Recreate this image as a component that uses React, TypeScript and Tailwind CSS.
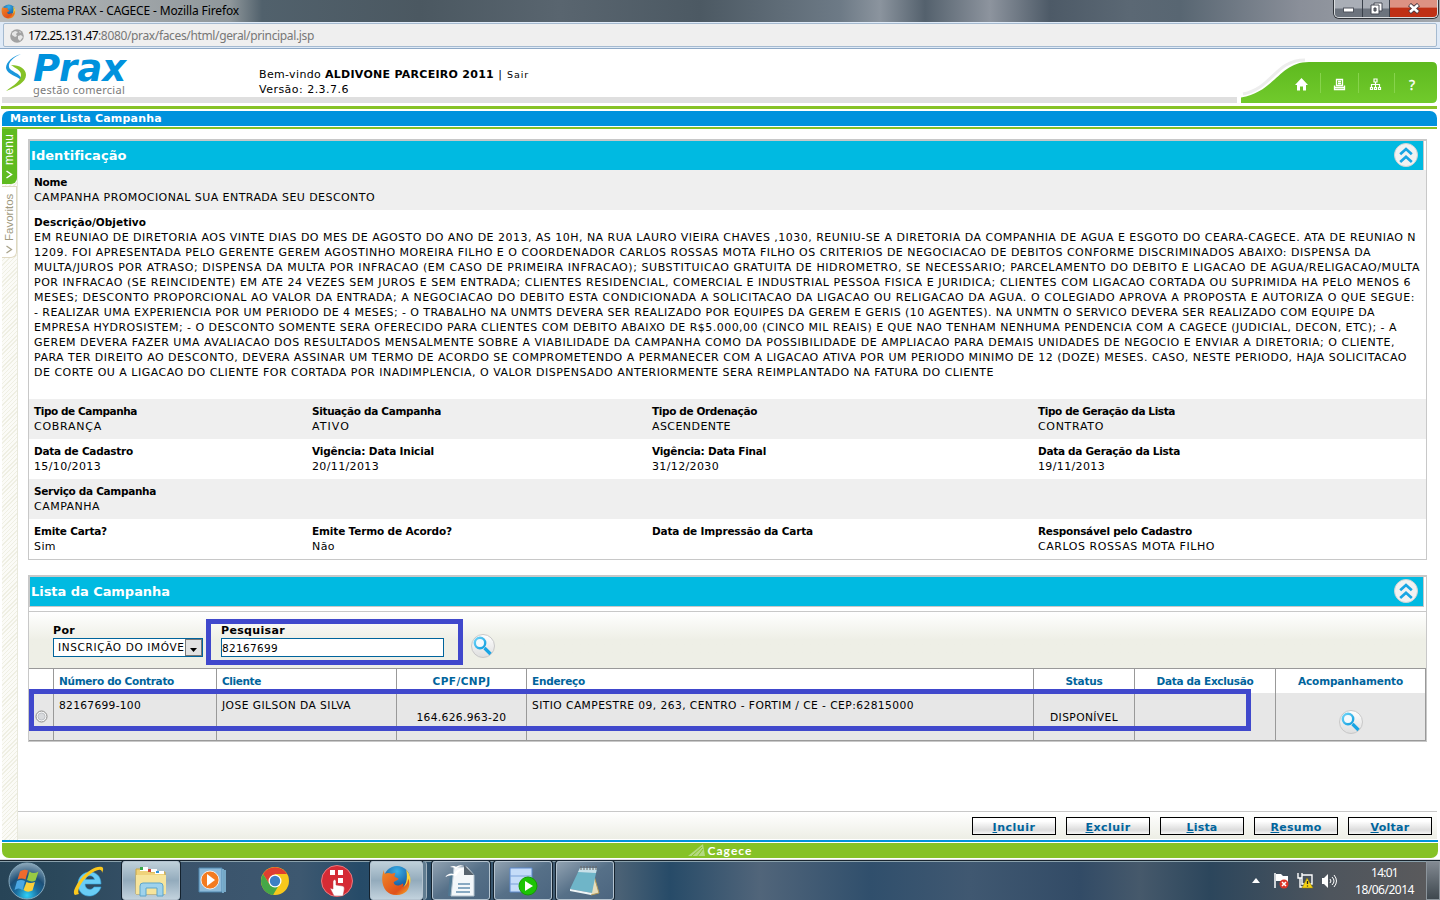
import React, { useLayoutEffect, useRef } from "react";

/* Inline text spread over a given width in pixels by letter spacing. */
function T({ w, className = "", children }: { w: number; className?: string; children: React.ReactNode }) {
  const ref = useRef<HTMLSpanElement>(null);
  useLayoutEffect(() => {
    const el = ref.current;
    if (!el) return;
    el.style.letterSpacing = "0px";
    const natural = el.getBoundingClientRect().width;
    el.style.letterSpacing = (w - natural) / (el.textContent || " ").length + "px";
  }, [w, children]);
  return (
    <span ref={ref} className={"inline-block whitespace-pre " + className}>
      {children}
    </span>
  );
}

function Field({ label, lw, value, vw }: { label: string; lw: number; value?: string; vw?: number }) {
  return (
    <div className="flex flex-col items-start">
      <T w={lw} className="text-[10.500px] font-bold">{label}</T>
      {value && <T w={vw || 0}>{value}</T>}
    </div>
  );
}

function Row({ shade, children }: { shade?: boolean; children: React.ReactNode }) {
  return (
    <div
      className={
        "grid h-10 shrink-0 grid-cols-[278px_340px_386px_1fr] pt-[5px] pl-[5px] leading-[15px] " +
        (shade ? "bg-[#efefef]" : "bg-white")
      }
    >
      {children}
    </div>
  );
}

const description: [string, number][] = [
  ["EM REUNIAO DE DIRETORIA AOS VINTE DIAS DO MES DE AGOSTO DO ANO DE 2013, AS 10H, NA RUA LAURO VIEIRA CHAVES ,1030, REUNIU-SE A DIRETORIA DA COMPANHIA DE AGUA E ESGOTO DO CEARA-CAGECE. ATA DE REUNIAO N", 1382],
  ["1209. FOI APRESENTADA PELO GERENTE GEREM AGOSTINHO MOREIRA FILHO E O COORDENADOR CARLOS ROSSAS MOTA FILHO OS CRITERIOS DE NEGOCIACAO DE DEBITOS CONFORME DISCRIMINADOS ABAIXO: DISPENSA DA", 1337],
  ["MULTA/JUROS POR ATRASO; DISPENSA DA MULTA POR INFRACAO (EM CASO DE PRIMEIRA INFRACAO); SUBSTITUICAO GRATUITA DE HIDROMETRO, SE NECESSARIO; PARCELAMENTO DO DEBITO E LIGACAO DE AGUA/RELIGACAO/MULTA", 1386],
  ["POR INFRACAO (SE REINCIDENTE) EM ATE 24 VEZES SEM JUROS E SEM ENTRADA; CLIENTES RESIDENCIAL, COMERCIAL E INDUSTRIAL PESSOA FISICA E JURIDICA; CLIENTES COM LIGACAO CORTADA OU SUPRIMIDA HA PELO MENOS 6", 1377],
  ["MESES; DESCONTO PROPORCIONAL AO VALOR DA ENTRADA; A NEGOCIACAO DO DEBITO ESTA CONDICIONADA A SOLICITACAO DA LIGACAO OU RELIGACAO DA AGUA. O COLEGIADO APROVA A PROPOSTA E AUTORIZA O QUE SEGUE:", 1381],
  ["- REALIZAR UMA EXPERIENCIA POR UM PERIODO DE 4 MESES; - O TRABALHO NA UNMTS DEVERA SER REALIZADO POR EQUIPES DA GEREM E GERIS (10 AGENTES). NA UNMTN O SERVICO DEVERA SER REALIZADO COM EQUIPE DA", 1341],
  ["EMPRESA HYDROSISTEM; - O DESCONTO SOMENTE SERA OFERECIDO PARA CLIENTES COM DEBITO ABAIXO DE R$5.000,00 (CINCO MIL REAIS) E QUE NAO TENHAM NENHUMA PENDENCIA COM A CAGECE (JUDICIAL, DECON, ETC); - A", 1363],
  ["GEREM DEVERA FAZER UMA AVALIACAO DOS RESULTADOS MENSALMENTE SOBRE A VIABILIDADE DA CAMPANHA COMO DA POSSIBILIDADE DE AMPLIACAO PARA DEMAIS UNIDADES DE NEGOCIO E ENVIAR A DIRETORIA; O CLIENTE,", 1361],
  ["PARA TER DIREITO AO DESCONTO, DEVERA ASSINAR UM TERMO DE ACORDO SE COMPROMETENDO A PERMANECER COM A LIGACAO ATIVA POR UM PERIODO MINIMO DE 12 (DOZE) MESES. CASO, NESTE PERIODO, HAJA SOLICITACAO", 1373],
  ["DE CORTE OU A LIGACAO DO CLIENTE FOR CORTADA POR INADIMPLENCIA, O VALOR DISPENSADO ANTERIORMENTE SERA REIMPLANTADO NA FATURA DO CLIENTE", 960],
];

function FirefoxLogo({ size }: { size: number }) {
  return (
    <svg width={size} height={size} viewBox="0 0 32 32" className="block shrink-0">
      <defs>
        <radialGradient id="ffBlue" cx="0.5" cy="0.2" r="0.8">
          <stop offset="0" stopColor="#39b0e8" />
          <stop offset="1" stopColor="#0b3d86" />
        </radialGradient>
        <linearGradient id="ffFox" x1="0" y1="0" x2="1" y2="1">
          <stop offset="0" stopColor="#f08a28" />
          <stop offset="0.7" stopColor="#e0501a" />
          <stop offset="1" stopColor="#f9b92a" />
        </linearGradient>
      </defs>
      <circle cx="16.5" cy="14.5" r="13.5" fill="url(#ffBlue)" />
      <path d="M26 5c5 5 6 13 2 19-4 6-11 8-17 6l9-5c6-3 8-10 6-20z" fill="#fbd23a" />
      <path d="M3 5c0 2 0 3 1 4 2-1 5-1 7 0l4-1c-1 2-1 3-1 4l4 2c0 2-3 2-5 4 1 4 6 4 9 1 2 1 1 3 0 4 4-1 6-5 6-9 3 6 1 17-12 17C4 31-2 19 3 5z" fill="url(#ffFox)" />
    </svg>
  );
}

function Lens() {
  return (
    <svg width="26" height="26" viewBox="0 0 26 26" className="block">
      <defs>
        <linearGradient id="lensBg" x1="0" y1="0" x2="0" y2="1">
          <stop offset="0" stopColor="#ffffff" />
          <stop offset="1" stopColor="#dedede" />
        </linearGradient>
        <linearGradient id="lensRing" x1="0" y1="0" x2="1" y2="1">
          <stop offset="0" stopColor="#6fd3f7" />
          <stop offset="1" stopColor="#0f9fe0" />
        </linearGradient>
      </defs>
      <circle cx="13" cy="13" r="11.500" fill="url(#lensBg)" stroke="#c8c8c8" />
      <circle cx="10" cy="10" r="5.200" fill="#f4fafd" stroke="url(#lensRing)" strokeWidth="2.400" />
      <path d="M14.500 15l6 6" stroke="#18a5e4" strokeWidth="3.200" />
    </svg>
  );
}

function CollapseIcon() {
  return (
    <svg width="24" height="24" viewBox="0 0 24 24" className="-mt-px block">
      <circle cx="12" cy="12" r="11.500" fill="#f2f2f2" stroke="#d2d2d2" />
      <path d="M6.200 11.200L12 6l5.800 5.200M6.200 19L12 13.800l5.800 5.200" fill="none" stroke="#18a5e4" strokeWidth="2.700" />
    </svg>
  );
}

function PanelTitle({ title, w }: { title: string; w: number }) {
  return (
    <div className="-mt-0.5 mr-[2px] flex h-[32px] shrink-0 items-center justify-between border border-t-2 border-[#c8c8c8] bg-[#00bae1] pr-[5px] pl-px text-white">
      <T w={w} className="text-[13px] leading-4 font-bold">{title}</T>
      <CollapseIcon />
    </div>
  );
}

function ActionButton({ first, rest, w }: { first: string; rest: string; w: number }) {
  return (
    <button className="flex h-[18px] w-[84px] items-center justify-center border border-black bg-linear-to-b from-white from-20% via-[#dcdcdc] via-75% to-[#f6f6f6] pt-[3px] text-[11px] leading-none font-bold text-[#00649c]">
      <T w={w}>
        <span className="underline underline-offset-1">{first}</span>
        {rest}
      </T>
    </button>
  );
}

function TaskButton({ active, className, children }: { active?: boolean; className: string; children: React.ReactNode }) {
  return (
    <div
      className={
        "flex h-[39px] shrink-0 items-center justify-center rounded-[3px] border border-[#b4c3cf] shadow-[0_0_0_1px_#14222e] " +
        (active ? "bg-linear-to-b from-[#bfd0da] via-[#93abbc] to-[#c2d2dd] " : "bg-linear-to-br from-[#91a2b1] via-[#567088] to-[#4c6680] ") +
        className
      }
    >
      {children}
    </div>
  );
}

const cell = "border-r border-[#999999] ";

export default function App() {
  return (
    <div className="relative flex h-[900px] w-[1440px] flex-col overflow-hidden bg-white font-['DejaVu_Sans',sans-serif] text-[11px] text-black">
      {/* Window title bar */}
      <div className="flex h-[22px] shrink-0 items-start justify-between bg-[linear-gradient(90deg,#b9bcbd_0,#a2a7aa_120px,#8f979b_230px,#51616c_262px,#4b5861_420px,#59656f_560px,#4c5963_700px,#6d7a86_840px,#8b949e_880px,#54616d_925px,#8d949e_990px,#4d5a67_1050px,#5b6874_1130px,#586672_1180px,#8a8f99_1300px,#a3a8ad_1440px)]">
        <div className="flex h-[22px] items-center gap-[5px] pl-px">
          <FirefoxLogo size={15} />
          <T w={218} className="font-['Noto_Sans',sans-serif] text-[12px] leading-4">Sistema PRAX - CAGECE - Mozilla Firefox</T>
        </div>
        <div className="mr-0.5 flex h-[18px] w-[104px] overflow-hidden rounded-b-[5px] border border-t-0 border-[#dadde0] shadow-[0_0_0_1px_#30343a]">
          <div className="flex w-7 items-center justify-center border-r border-[#39404a] bg-linear-to-b from-[#a9aeb6] from-45% to-[#6c737d] to-55%">
            <svg width="14" height="8" viewBox="0 0 14 8"><rect x="1.500" y="3" width="10" height="4" fill="#fff" stroke="#50555e" /></svg>
          </div>
          <div className="flex w-[27px] items-center justify-center border-r border-[#39404a] bg-linear-to-b from-[#a9aeb6] from-45% to-[#6c737d] to-55%">
            <svg width="13" height="13" viewBox="0 0 13 13" fill="#fff" stroke="#444953"><path d="M4 1h8v8H4z" /><path d="M1 3h8v9H1z" /><path d="M4 6h2v3H4z" fill="#777" /></svg>
          </div>
          <div className="flex flex-1 items-center justify-center bg-linear-to-b from-[#dd9283] from-40% to-[#bf3015] to-50%">
            <svg width="14" height="11" viewBox="0 0 14 11"><path d="M2.500 1.500l9 8M11.500 1.500l-9 8" stroke="#4d3b42" strokeWidth="4.400" /><path d="M3 2l8 7M11 2L3 9" stroke="#fff" strokeWidth="2.600" /></svg>
          </div>
        </div>
      </div>

      {/* Address bar */}
      <div className="flex h-[27px] shrink-0 border-b border-[#8fa9c6] bg-[#dfeaf7] px-[3px] py-px">
        <div className="flex h-6 flex-1 items-center rounded-[2px] border border-[#a5bad0] bg-[#efefef] pt-px pl-[6px] font-['Noto_Sans',sans-serif] text-[12px] leading-4">
          <svg width="14" height="14" viewBox="0 0 14 14" className="mr-1"><circle cx="7" cy="7" r="6.800" fill="#a2a2a2" /><path d="M2 4l3-2 3 1-2 2 1 2-2 1-3-2zM8 7l3-1 2 2-3 4-2-2zM9 2l2 1-1 1z" fill="#e6e6e6" /></svg>
          <T w={70}>172.25.131.47</T>
          <T w={216} className="text-[#777777]">:8080/prax/faces/html/geral/principal.jsp</T>
        </div>
      </div>

      {/* Application header */}
      <header className="flex h-[57px] shrink-0 pl-[2px]">
        <div className="flex h-[54px] w-[1235px] flex-col">
          <div className="flex h-12 shrink-0">
            <div className="flex w-[257px] shrink-0 pt-1 pl-[3px]">
              <svg width="22" height="40" viewBox="0 0 22 40" className="shrink-0">
                <path d="M16 1C8 3 1 9 1 15c1 7 12 8 16 13 0-8-12-9-13-14C3 9 9 4 16 1z" fill="#1a97dc" />
                <path d="M6 12c9 0 15 4 15 10 0 7-9 12-20 16 8-6 15-10 15-16 0-5-6-7-10-10z" fill="#86c226" />
              </svg>
              <div className="flex flex-col items-start pl-[6px]">
                <T w={93} className="h-[31px] font-['DejaVu_Sans'] text-[37px] leading-[31px] font-bold text-[#0092dd] italic">Prax</T>
                <T w={92} className="font-['Noto_Sans',sans-serif] text-[11px] leading-[12px] text-[#7b7b7b]">gestão comercial</T>
              </div>
            </div>
            <div className="flex flex-col items-start pt-[18px] leading-[15px]">
              <div className="flex h-[15px] items-baseline">
                <T w={66}>Bem-vindo </T>
                <T w={169} className="font-bold">ALDIVONE PARCEIRO 2011</T>
                <T w={13}> | </T>
                <T w={22} className="text-[9.500px]">Sair</T>
              </div>
              <T w={90}>Versão: 2.3.7.6</T>
            </div>
          </div>
          <div className="h-[6px] shrink-0 bg-[#dfdfdf]" />
        </div>
        <div className="mt-[5px] w-[202px]">
          <svg width="202" height="52" viewBox="0 0 202 52">
            <defs>
              <linearGradient id="tab" x1="0" y1="0" x2="0" y2="1"><stop offset="0" stopColor="#5eb91f" /><stop offset="1" stopColor="#71ca2c" /></linearGradient>
            </defs>
            <path d="M6 40C36 34 38 6 68 6" fill="none" stroke="#ededed" strokeWidth="3" />
            <path d="M4 43.500C38 38 42 8 72 8H195q5 0 5 5V44q0 5-5 5H4z" fill="url(#tab)" />
            <g stroke="#87d34c"><path d="M83.500 19v20M121.500 19v20M157.500 19v20" /></g>
            <path d="M64.500 24l6.500 7h-2v5.500h-3v-4h-3v4h-3v-5.500h-2z" fill="#fff" />
            <path d="M99.500 25.500h6v6h-6zM97.500 31.500v4h10v-4M97.500 33.500h10M101 27.500h3M101 29.500h3" fill="none" stroke="#fff" strokeWidth="1.300" />
            <path d="M137 25h3v3h-3zM138.500 28v3M134.500 33v-2.500h8V33M138.500 30v3M133.500 33.500h2v2h-2zM137.500 33.500h2v2h-2zM141.500 33.500h2v2h-2z" fill="none" stroke="#fff" strokeWidth="1.200" />
            <text x="172" y="36" fill="#fff" stroke="#fff" strokeWidth="0.300" fontSize="14" fontFamily="Noto Sans">?</text>
          </svg>
        </div>
      </header>
      <div className="mr-[3px] ml-px h-[3px] shrink-0 bg-[#86c226]" />
      <div className="mt-0.5 mr-[3px] mb-px ml-[2px] flex h-[15px] shrink-0 items-center rounded-t-[7px] bg-[#0092dd] pl-2 text-white">
        <T w={152} className="leading-[15px] font-bold">Manter Lista Campanha</T>
      </div>
      <div className="mr-[3px] ml-[2px] h-0.5 shrink-0 bg-[#86c226]" />

      <div className="flex h-[711px] shrink-0">
        {/* Side tabs */}
        <aside className="mr-2.5 ml-[2px] flex w-4 shrink-0 flex-col border-r border-[#e8e8dc] bg-[repeating-linear-gradient(135deg,#efefe3_0,#efefe3_1px,#fbfbf7_1px,#fbfbf7_3px)]">
          <div className="flex h-[55px] w-[15px] flex-col items-center justify-between rounded-br-[6px] bg-[#5fbb20] pt-1 pb-[5px] text-white">
            <div className="h-8 w-[15px] rotate-180 font-['Liberation_Sans'] text-[12px] leading-[15px] tracking-[0.300px] [writing-mode:vertical-rl]">menu</div>
            <svg width="9" height="9" viewBox="0 0 9 9"><path d="M1.500 1l5 3.500-5 3.500" fill="none" stroke="#fff" strokeWidth="1.500" /></svg>
          </div>
          <div className="mt-0.5 flex h-[72px] w-[15px] flex-col items-center justify-between rounded-br-[6px] border border-l-0 border-[#dfd8c0] bg-white pt-1 pb-[3px] text-[#a09a80]">
            <div className="h-[50px] w-[15px] rotate-180 font-['Liberation_Sans'] text-[11.500px] leading-[15px] [writing-mode:vertical-rl]">Favoritos</div>
            <svg width="9" height="9" viewBox="0 0 9 9"><path d="M1.500 1l5 3.500-5 3.500" fill="none" stroke="#a8a28a" strokeWidth="1.300" /></svg>
          </div>
        </aside>

        <main className="flex w-[1399px] flex-col pt-[10px]">
          {/* Campaign identification */}
          <section className="flex h-[421px] shrink-0 flex-col border border-t-2 border-[#c8c8c8]">
            <PanelTitle title="Identificação" w={95} />
            <div className="-mt-px flex flex-col">
              <Row shade><Field label="Nome" lw={33} value="CAMPANHA PROMOCIONAL SUA ENTRADA SEU DESCONTO" vw={341} /></Row>
              <div className="flex h-[189px] shrink-0 flex-col items-start pt-[5px] pl-[5px] leading-[15px]">
                <T w={112} className="text-[10.500px] font-bold">Descrição/Objetivo</T>
                {description.map(([line, w]) => (
                  <T key={line} w={w}>{line}</T>
                ))}
              </div>
              <Row shade>
                <Field label="Tipo de Campanha" lw={103} value="COBRANÇA" vw={68} />
                <Field label="Situação da Campanha" lw={129} value="ATIVO" vw={38} />
                <Field label="Tipo de Ordenação" lw={105} value="ASCENDENTE" vw={79} />
                <Field label="Tipo de Geração da Lista" lw={137} value="CONTRATO" vw={66} />
              </Row>
              <Row>
                <Field label="Data de Cadastro" lw={99} value="15/10/2013" vw={67} />
                <Field label="Vigência: Data Inicial" lw={122} value="20/11/2013" vw={67} />
                <Field label="Vigência: Data Final" lw={114} value="31/12/2030" vw={67} />
                <Field label="Data da Geração da Lista" lw={142} value="19/11/2013" vw={67} />
              </Row>
              <Row shade><Field label="Serviço da Campanha" lw={122} value="CAMPANHA" vw={66} /></Row>
              <Row>
                <Field label="Emite Carta?" lw={73} value="Sim" vw={22} />
                <Field label="Emite Termo de Acordo?" lw={140} value="Não" vw={23} />
                <Field label="Data de Impressão da Carta" lw={161} />
                <Field label="Responsável pelo Cadastro" lw={154} value="CARLOS ROSSAS MOTA FILHO" vw={177} />
              </Row>
            </div>
          </section>

          {/* Campaign list */}
          <section className="mt-[15px] flex h-[167px] shrink-0 flex-col border border-t-2 border-[#c8c8c8]">
            <PanelTitle title="Lista da Campanha" w={139} />
            <div className="mt-[4px] flex h-[57px] shrink-0 items-start border-t border-[#c8c8c8] bg-linear-to-b from-white to-[#eeefe6] to-50% pl-6">
              <div className="flex w-[168px] flex-col items-start pt-3">
                <T w={22} className="leading-[14px] font-bold">Por</T>
                <div className="flex h-[19px] w-[150px] justify-between border border-[#00649c] bg-white">
                  <div className="w-[131px] overflow-hidden pl-1 leading-[17px]"><T w={133} className="text-[10.500px]">INSCRIÇÃO DO IMÓVEL</T></div>
                  <div className="flex w-[17px] shrink-0 items-center justify-center border border-[#777] bg-[#e2e2e2] pt-1">
                    <svg width="7" height="4" viewBox="0 0 7 4"><path d="M0 0h7L3.500 4z" /></svg>
                  </div>
                </div>
              </div>
              <div className="flex w-[249px] flex-col items-start pt-3">
                <T w={64} className="leading-[14px] font-bold">Pesquisar</T>
                <div className="h-[19px] w-[223px] border border-[#00649c] bg-white pt-px leading-[17px]"><T w={56} className="text-[10.500px]">82167699</T></div>
              </div>
              <div className="mt-[21px]"><Lens /></div>
            </div>
            <div className="grid h-[25px] shrink-0 grid-cols-[25px_163px_180px_130px_507px_101px_141px_150px] border-t border-[#999999] text-[10.500px] leading-[25px] font-bold text-[#00649c]">
              <div className={cell} />
              <div className={cell + "pl-[5px]"}><T w={115}>Número do Contrato</T></div>
              <div className={cell + "pl-[5px]"}><T w={39}>Cliente</T></div>
              <div className={cell + "text-center"}><T w={58}>CPF/CNPJ</T></div>
              <div className={cell + "pl-[5px]"}><T w={53}>Endereço</T></div>
              <div className={cell + "text-center"}><T w={37}>Status</T></div>
              <div className={cell + "text-center"}><T w={97}>Data da Exclusão</T></div>
              <div className={cell + "text-center"}><T w={105}>Acompanhamento</T></div>
            </div>
            <div className="grid h-12 shrink-0 grid-cols-[25px_163px_180px_130px_507px_101px_141px_150px] border-b border-[#999999] bg-[#e7e7e7] text-[10.700px] leading-[15px]">
              <div className={cell + "flex justify-center pt-[17px]"}>
                <svg width="13" height="13" viewBox="0 0 13 13"><circle cx="6.500" cy="6.500" r="5.500" fill="#f6f6f6" stroke="#8a8a8a" /><circle cx="6.500" cy="6.500" r="3.500" fill="#d8dadd" stroke="#bfc2c6" /></svg>
              </div>
              <div className={cell + "pt-[5px] pl-[5px]"}><T w={82}>82167699-100</T></div>
              <div className={cell + "pt-[5px] pl-[5px]"}><T w={129}>JOSE GILSON DA SILVA</T></div>
              <div className={cell + "pt-[17px] text-center"}><T w={90}>164.626.963-20</T></div>
              <div className={cell + "pt-[5px] pl-[5px]"}><T w={382}>SITIO CAMPESTRE 09, 263, CENTRO - FORTIM / CE - CEP:62815000</T></div>
              <div className={cell + "pt-[17px] text-center"}><T w={68}>DISPONÍVEL</T></div>
              <div className={cell} />
              <div className={cell + "flex justify-center pt-4"}><Lens /></div>
            </div>
          </section>
        </main>
      </div>

      {/* Highlight frames laid over the form */}
      <div className="pointer-events-none absolute top-[619px] left-[206px] h-[46px] w-[257px] border-5 border-[#4048cc]" />
      <div className="pointer-events-none absolute top-[689px] left-[29px] h-[42px] w-[1222px] border-5 border-[#4048cc]" />

      {/* Actions */}
      <div className="-mt-[29px] mr-[3px] ml-[18px] flex h-[28px] shrink-0 items-start justify-end gap-2.5 border-t border-[#c8c8c8] bg-linear-to-b from-white to-[#edeee5] pt-[5px] pr-[5px]">
        <ActionButton first="I" rest="ncluir" w={43} />
        <ActionButton first="E" rest="xcluir" w={45} />
        <ActionButton first="L" rest="ista" w={31} />
        <ActionButton first="R" rest="esumo" w={51} />
        <ActionButton first="V" rest="oltar" w={39} />
      </div>
      <div className="mt-px mr-[2px] ml-[2px] h-0.5 shrink-0 bg-[#0092dd]" />
      <footer className="mx-[2px] mt-px flex h-[15px] shrink-0 items-center justify-center rounded-b-[7px] bg-[#86c226] text-white">
        <svg width="18" height="14" viewBox="0 0 18 14"><path d="M0 12L15 0l2 12z" fill="#b4d981" /><path d="M4 12l10-9M9 13l6-8" stroke="#86c226" /></svg>
        <T w={45} className="ml-0.5 font-['Lato',sans-serif] text-[12px] leading-[14px] font-bold">Cagece</T>
      </footer>
      <div className="mt-px h-px shrink-0 bg-[#dddddd]" />

      {/* Taskbar */}
      <div className="flex h-10 flex-1 items-center border-t border-[#17232c] bg-[linear-gradient(90deg,#274457_0,#2b485b_60px,#3a536b_180px,#3d5870_300px,#264b68_360px,#4a6175_620px,#274b68_670px,#51657a_760px,#304f6c_870px,#405871_970px,#324b66_1080px,#46596b_1140px,#2c465c_1210px,#4e555d_1330px,#5a5a5c_1425px)] shadow-[inset_0_1px_0_#8aa0ab]">
        <div className="flex w-[121px] shrink-0 items-center pl-2">
          <svg width="38" height="38" viewBox="0 0 38 38">
            <defs><radialGradient id="orb" cx="0.5" cy="0.9" r="0.9"><stop offset="0" stopColor="#2fd0f7" /><stop offset="0.35" stopColor="#1a6c9e" /><stop offset="0.6" stopColor="#1d4f77" /><stop offset="1" stopColor="#8fa9ba" /></radialGradient></defs>
            <circle cx="19" cy="19" r="18" fill="url(#orb)" stroke="#86a9bd" />
            <path d="M12 9.500q4-3 8-1l-2.500 9q-4-2-8 0z" fill="#ee6a2d" />
            <path d="M21.500 9.500q4 3 9 0l-3 9q-4 2-8.500-.5z" fill="#98c944" />
            <path d="M9 19q4-2 8 0l-2.500 9q-4-3-8 0z" fill="#4ba7e3" />
            <path d="M18.500 20q4 2 8.500 0l-2.500 8.500q-5 2.500-9-.5z" fill="#fbcf3a" />
          </svg>
          <svg width="32" height="34" viewBox="0 0 32 34" className="ml-[27px]">
            <path d="M28 20H12c0 6 7 7 9 3h7c-4 13-23 12-23-3 0-15 23-17 23 0zM21.500 15.500c-1-5-8-5-9 0z" fill="#69cdf5" stroke="#3ba6dd" strokeWidth="0.600" />
            <path d="M2 31C-4 27 16 0 29 3c2 1 1 4 0 6 1-9-18 2-23 15-1 3-1 5 0 6z" fill="#fbc81e" />
          </svg>
        </div>
        <TaskButton active className="ml-px w-[58px]">
          <svg width="34" height="32" viewBox="0 0 34 32">
            <path d="M2 4h12l2 3h15v22H2z" fill="#efd27a" stroke="#c9a545" />
            <path d="M6 2h8v4H6z" fill="#fff" /><path d="M6 2h3v3H6z" fill="#35a748" /><path d="M14 4h9v3h-9z" fill="#fff" /><path d="M14 4h3v3h-3z" fill="#cc4237" /><path d="M21 6h9v3h-9z" fill="#fff" /><path d="M22 6h3v2h-3z" fill="#3193d6" />
            <path d="M2 10h30v19H2z" fill="#f6e49c" /><path d="M6 31V21q0-3 3-3h17q3 0 3 3v10h-6v-8H12v8z" fill="#9ed2ec" stroke="#5da5cb" />
          </svg>
        </TaskButton>
        <div className="flex w-[188px] shrink-0 items-center pl-[18px]">
          <svg width="28" height="28" viewBox="0 0 28 28"><path d="M1 1h23v24H1z" fill="#8fbbd9" stroke="#4f86ae" /><path d="M25 2v24M27 3v22" stroke="#8bc4e5" strokeWidth="1.500" /><circle cx="12" cy="13" r="9" fill="#f37b20" stroke="#fff" strokeWidth="0.800" /><path d="M9 7l8 6-8 6z" fill="#fff" /></svg>
          <svg width="28" height="28" viewBox="0 0 28 28" className="ml-[35px]"><circle cx="14" cy="14" r="14" fill="#f8c81c" /><path d="M2 7a14 14 0 0 1 24 0H14l-5 11z" fill="#df3e30" /><path d="M2 7a14 14 0 0 0 10 21l6-10-9 0z" fill="#45a748" /><circle cx="14" cy="14" r="6.500" fill="#fff" /><circle cx="14" cy="14" r="5.200" fill="#3c7fc6" /></svg>
          <svg width="32" height="32" viewBox="0 0 32 32" className="ml-[32px]"><circle cx="16" cy="16" r="15.500" fill="#d52b35" stroke="#e97b80" /><path d="M9 5h5v5H9zM17 5h5v5h-5zM17 13h5v5h-5z" fill="#fff" /><path d="M12 16q2-3 3 0v4l7 1q2 1 1 5l-1 5h-9l-4-8 3 1z" fill="#fff" stroke="#b63b42" strokeWidth="0.500" /></svg>
        </div>
        <TaskButton active className="ml-[2px] w-[53px]"><FirefoxLogo size={31} /></TaskButton>
        <div className="h-[39px] w-1 shrink-0 rounded-r border-r border-[#a1b2bf] bg-[#607c90]" />
        <TaskButton className="ml-[5px] w-[58px]">
          <svg width="34" height="33" viewBox="0 0 34 33"><path d="M6 9h5v23H4z" fill="#507893" /><path d="M10 3h13l7 8v21H7z" fill="#f3f7fa" stroke="#b4c3cf" /><path d="M20 1l10 10H20z" fill="#58646f" /><path d="M14 20h12M14 24h12M12 28h14" stroke="#6690b0" strokeWidth="1.500" /><path d="M1 13q4-5 9-3 3-6 10-5-5 1-8 7-5-2-11 1zM6 3q4-2 6 0 3-3 8-1-6 0-8 3-2-2-6-2z" fill="#fff" /></svg>
        </TaskButton>
        <TaskButton className="ml-1 w-[58px]">
          <svg width="30" height="30" viewBox="0 0 30 30"><path d="M2 2h22v24H2z" fill="#c5dcf8" stroke="#5c88ca" /><path d="M2 10h22M2 18h22" stroke="#7ba1d8" /><circle cx="20" cy="20" r="9" fill="#1cc404" stroke="#179803" /><path d="M17 15l8 5-8 5z" fill="#fff" /></svg>
        </TaskButton>
        <TaskButton className="ml-1 w-[58px]">
          <svg width="34" height="32" viewBox="0 0 34 32"><path d="M24 4l7 24-8 2z" fill="#e6ddbc" stroke="#b49a58" /><path d="M12 3h17l-5 25-22-4z" fill="#6fb5c8" /><path d="M12 3h17l-1 5-18-1z" fill="#c9e0e8" /><path d="M2 24l22 4-1 2-21-4z" fill="#eef5f7" /><path d="M13 1v4M16 1v4M19 1v4M22 1v4M25 1v4M28 1v4" stroke="#666" /></svg>
        </TaskButton>

        <div className="ml-auto flex h-full items-center text-white">
          <svg width="8" height="5" viewBox="0 0 8 5" className="mr-[13px]"><path d="M0 5l4-5 4 5z" fill="#fff" /></svg>
          <svg width="17" height="17" viewBox="0 0 17 17" className="mr-[7px]"><path d="M2 1v15" stroke="#fff" strokeWidth="1.500" /><path d="M3 2h5l2 2h5v7h-6l-1-2H3z" fill="#fff" /><circle cx="11" cy="12" r="4.500" fill="#dc3327" /><path d="M9 10l4 4M13 10l-4 4" stroke="#fff" strokeWidth="1.500" /></svg>
          <svg width="17" height="17" viewBox="0 0 17 17" className="mr-[7px]"><path d="M5 3h10v9H5zM1 1v5h4V1M3 6v9h4" fill="none" stroke="#fff" strokeWidth="1.400" /><path d="M10 6l6 10H5z" fill="#f7d214" stroke="#8c7800" strokeWidth="0.500" /><path d="M10.500 9v3M10.500 13.500v1" stroke="#222" strokeWidth="1.300" /></svg>
          <svg width="16" height="16" viewBox="0 0 16 16" className="mr-[18px]"><path d="M1 5h2l4-4v14l-4-4H1z" fill="#fff" /><path d="M9 6q2 2 0 4M11 4q4 4 0 8M13 2q5 6 0 12" fill="none" stroke="#fff" /></svg>
          <div className="mr-[12px] flex w-[59px] flex-col items-center font-['Noto_Sans',sans-serif] text-[12px] leading-[17px]">
            <T w={27}>14:01</T>
            <T w={59}>18/06/2014</T>
          </div>
          <div className="h-[39px] w-[14px] border border-[#8c959c] bg-linear-to-b from-[#838a92] to-[#3f484f]" />
        </div>
      </div>
    </div>
  );
}
